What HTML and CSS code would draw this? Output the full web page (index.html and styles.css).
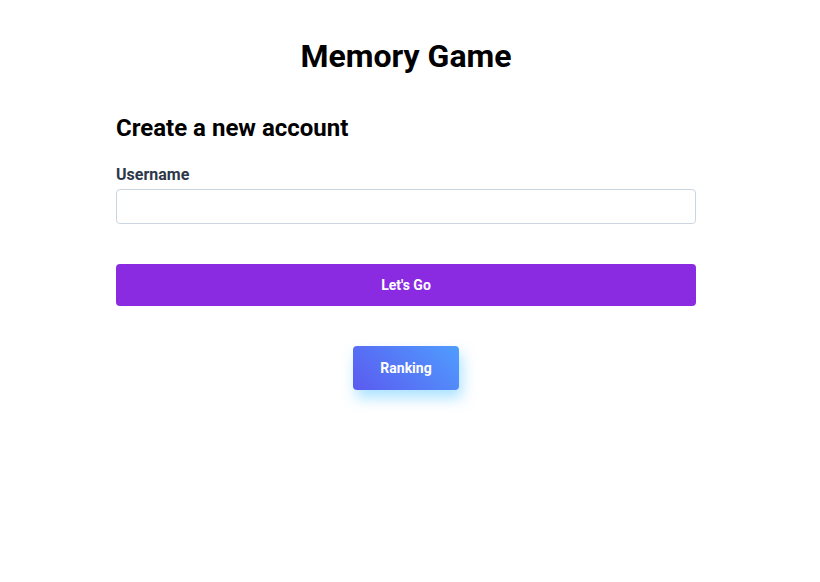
FILE: index.html
```html
<!DOCTYPE html>
<html lang="en">
<head>
<meta charset="utf-8">
<title>Memory Game</title>
<link rel="stylesheet" href="styles.css">
</head>
<body>
<main class="page">
  <h1 class="title">Memory Game</h1>
  <form class="form" onsubmit="return false">
    <h2 class="subtitle">Create a new account</h2>
    <label class="label" for="username">Username</label>
    <input class="input" id="username" type="text">
    <button class="btn-primary" type="submit">Let's Go</button>
  </form>
  <div class="ranking-wrap">
    <button class="btn-ranking" type="button">Ranking</button>
  </div>
</main>
</body>
</html>
```
FILE: styles.css
```css
* { box-sizing: border-box; }
html, body { margin: 0; background: #fff; }
body {
  padding-right: 8px;
  font-family: Roboto, "Liberation Sans", Arial, sans-serif;
  color: #000;
}
.page {
  width: 580px;
  margin: 0 auto;
  padding-top: 36px;
  padding-bottom: 60px;
}
.title {
  margin: 0;
  text-align: center;
  font-size: 32px;
  font-weight: 700;
  line-height: 40px;
}
.form {
  display: flex;
  flex-direction: column;
  margin-top: 36px;
}
.subtitle {
  margin: 0;
  font-size: 24px;
  font-weight: 700;
  line-height: 32px;
}
.label {
  margin-top: 21px;
  font-size: 16px;
  font-weight: 700;
  line-height: 20px;
  color: #2d3748;
}
.input {
  margin-top: 4px;
  height: 35px;
  border: 1px solid #cbd5e0;
  border-radius: 4px;
  padding: 0 10px;
  font: inherit;
  outline: none;
}
.btn-primary {
  margin-top: 40px;
  height: 42px;
  border: 0;
  border-radius: 4px;
  background: #8a2be2;
  color: #fff;
  font: 700 14px Roboto, "Liberation Sans", sans-serif;
}
.ranking-wrap {
  display: flex;
  justify-content: center;
  margin-top: 40px;
}
.btn-ranking {
  width: 106px;
  height: 44px;
  border: 0;
  border-radius: 4px;
  background: linear-gradient(45deg, #5b5aef 0%, #4f9dff 100%);
  box-shadow: 3px 8px 14px rgba(90, 200, 255, 0.5);
  color: #fff;
  font: 700 14px Roboto, "Liberation Sans", sans-serif;
}
```
